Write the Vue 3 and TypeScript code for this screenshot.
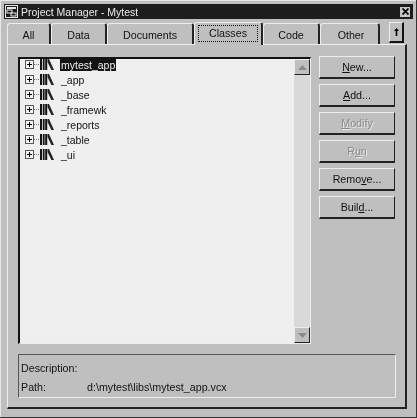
<script setup lang="ts">
const tabs = [
  { label: "All", width: 44 },
  { label: "Data", width: 56 },
  { label: "Documents", width: 87 },
  { label: "Classes", width: 69, active: true },
  { label: "Code", width: 57 },
  { label: "Other", width: 60 },
];

const libs = ["mytest_app", "_app", "_base", "_framewk", "_reports", "_table", "_ui"];

const buttons = [
  { before: "", key: "N", after: "ew..." },
  { before: "", key: "A", after: "dd..." },
  { before: "", key: "M", after: "odify", disabled: true },
  { before: "R", key: "u", after: "n", disabled: true },
  { before: "Remo", key: "v", after: "e..." },
  { before: "Buil", key: "d", after: "..." },
];
</script>

<template>
  <div class="window">
    <div class="titlebar">
      <svg class="app-icon" width="13" height="13" viewBox="0 0 13 13">
        <rect x="0.5" y="0.5" width="12" height="12" fill="#1a1a1a" stroke="#e8e8e8" />
        <rect x="2" y="2" width="9" height="2" fill="#e8e8e8" />
        <rect x="2" y="5" width="5" height="3" fill="none" stroke="#e8e8e8" />
        <rect x="6" y="8" width="5" height="3" fill="none" stroke="#e8e8e8" />
      </svg>
      <span class="title">Project Manager - Mytest</span>
      <span class="close">
        <svg width="7" height="7" viewBox="0 0 7 7">
          <path d="M0.5 0.5l6 6M6.5 0.5l-6 6" stroke="#000" stroke-width="1.7" fill="none" />
        </svg>
      </span>
    </div>

    <div class="tabrow">
      <div
        v-for="tab in tabs"
        :key="tab.label"
        class="tab"
        :class="{ active: tab.active }"
        :style="{ width: tab.width + 'px' }"
      >
        <span class="tab-label">{{ tab.label }}</span>
      </div>
      <div class="arrow-btn">
        <svg width="5" height="8" viewBox="0 0 5 8">
          <path d="M2.5 0L5 3H3.3V8H1.7V3H0Z" fill="#000" />
        </svg>
      </div>
    </div>

    <div class="panel">
      <div class="main">
        <div class="listbox">
          <div class="rows">
            <div v-for="(lib, i) in libs" :key="lib" class="row">
              <svg class="tree" width="30" height="13" viewBox="0 0 30 13">
                <rect x="0.5" y="2.5" width="8" height="8" fill="#f4f4f4" stroke="#555" />
                <path d="M2 6.5h5M4.5 4v5" stroke="#000" fill="none" />
                <path d="M9 6.5h6" stroke="#777" stroke-dasharray="1 1" fill="none" />
                <path d="M15 1h2.2v11H15zM18 1h1.6v11H18zM20.2 1h2v11h-2z" fill="#111" />
                <path d="M22.5 1h1.5L29 12h-2.6L22.5 4z" fill="#222" />
              </svg>
              <span class="name" :class="{ selected: i === 0 }">{{ lib }}</span>
            </div>
          </div>
          <div class="scrollbar">
            <div class="scroll-btn">
              <svg width="9" height="5" viewBox="0 0 9 5"><path d="M4.5 0L9 5H0Z" fill="#8a8a8a" /></svg>
            </div>
            <div class="scroll-btn">
              <svg width="9" height="5" viewBox="0 0 9 5"><path d="M0 0H9L4.5 5Z" fill="#8a8a8a" /></svg>
            </div>
          </div>
        </div>

        <div class="actions">
          <div v-for="b in buttons" :key="b.after" class="btn" :class="{ disabled: b.disabled }">
            <span>{{ b.before }}<u>{{ b.key }}</u>{{ b.after }}</span>
          </div>
        </div>
      </div>

      <div class="info">
        <div class="info-line">Description:</div>
        <div class="info-line"><span class="info-key">Path:</span>d:\mytest\libs\mytest_app.vcx</div>
      </div>
    </div>
  </div>
</template>

<style>
html,
body {
  margin: 0;
  background: #bfbfbf;
}
</style>

<style scoped>
.window {
  box-sizing: border-box;
  width: 417px;
  height: 418px;
  padding: 4px 3px 0 4px;
  background: #bfbfbf;
  border-right: 1px solid #333;
  border-bottom: 1px solid #333;
  box-shadow: inset 1px 1px 0 #e8e8e8;
  font-family: "Liberation Sans", Arial, sans-serif;
  font-size: 10.7px;
  color: #111;
  overflow: hidden;
  opacity: 0.99;
}
.titlebar {
  display: flex;
  align-items: center;
  height: 15px;
  padding: 0 3px 0 1px;
  background: #1c1c1c;
}
.app-icon {
  flex: none;
}
.title {
  margin-left: 3px;
  color: #ececec;
  flex: 1;
  font-size: 10.5px;
}
.close {
  display: flex;
  align-items: center;
  justify-content: center;
  width: 10px;
  height: 10px;
  background: #c8c8c8;
  box-sizing: border-box;
}
.tabrow {
  display: flex;
  align-items: flex-end;
  height: 25px;
  margin-left: 3px;
}
.tab {
  box-sizing: border-box;
  height: 21px;
  display: flex;
  align-items: center;
  justify-content: center;
  border-top: 1px solid #eee;
  border-left: 1px solid #eee;
  border-right: 2px solid #222;
  border-radius: 3px 3px 0 0;
  padding-top: 2px;
}
.tab:nth-child(6) {
  padding-left: 3px;
}
.tab.active {
  position: relative;
  z-index: 1;
  height: 23px;
  margin-bottom: -1px;
  padding-top: 0;
  padding-bottom: 2px;
  background: #bfbfbf;
}
.tab-label {
  line-height: 13px;
}
.tab.active .tab-label {
  width: 100%;
  margin: 0 3px;
  padding: 1px 0;
  text-align: center;
  border: 1px dotted #111;
}
.arrow-btn {
  box-sizing: border-box;
  width: 15px;
  height: 21px;
  margin-left: 9px;
  margin-bottom: 1px;
  display: flex;
  align-items: center;
  justify-content: center;
  border-top: 1px solid #eee;
  border-left: 1px solid #eee;
  border-right: 2px solid #111;
  border-bottom: 2px solid #111;
}
.panel {
  box-sizing: border-box;
  width: 400px;
  height: 365px;
  margin-left: 3px;
  padding: 12px 10px 0 10px;
  border-top: 1px solid #eee;
  border-left: 1px solid #eee;
  border-right: 2px solid #222;
  border-bottom: 2px solid #222;
}
.main {
  display: flex;
  align-items: flex-start;
}
.listbox {
  box-sizing: border-box;
  display: flex;
  width: 294px;
  height: 287px;
  background: #f0f0f0;
  border-top: 2px solid #111;
  border-left: 2px solid #111;
  border-right: 1px solid #eee;
  border-bottom: 1px solid #eee;
}
.rows {
  flex: 1;
  margin-top: -2px;
  padding-left: 5px;
}
.row {
  display: flex;
  align-items: center;
  height: 15px;
}
.tree {
  flex: none;
}
.name {
  margin-left: 5px;
  padding: 0 1px;
  line-height: 12px;
  font-size: 10.5px;
}
.name.selected {
  background: #111;
  color: #f0f0f0;
}
.scrollbar {
  width: 16px;
  display: flex;
  flex-direction: column;
  justify-content: space-between;
  background: #dadada;
}
.scroll-btn {
  box-sizing: border-box;
  width: 16px;
  height: 16px;
  display: flex;
  align-items: center;
  justify-content: center;
  background: #bfbfbf;
  border-top: 1px solid #eee;
  border-left: 1px solid #eee;
  border-right: 1px solid #222;
  border-bottom: 1px solid #222;
}
.actions {
  display: flex;
  flex-direction: column;
  gap: 5px;
  margin-left: 8px;
  margin-top: -1px;
}
.btn {
  box-sizing: border-box;
  width: 76px;
  height: 23px;
  display: flex;
  align-items: center;
  justify-content: center;
  border-top: 1px solid #eee;
  border-left: 1px solid #eee;
  border-right: 1px solid #222;
  border-bottom: 2px solid #222;
}
.btn.disabled {
  color: #8a8a8a;
  text-shadow: 1px 1px 0 #ececec;
}
.info {
  box-sizing: border-box;
  width: 378px;
  height: 44px;
  margin-top: 10px;
  padding: 4px 2px 0;
  border-top: 1px solid #555;
  border-left: 1px solid #555;
  border-right: 1px solid #eee;
  border-bottom: 1px solid #eee;
}
.info-line {
  height: 19px;
  line-height: 19px;
}
.info-key {
  display: inline-block;
  width: 66px;
}
</style>
